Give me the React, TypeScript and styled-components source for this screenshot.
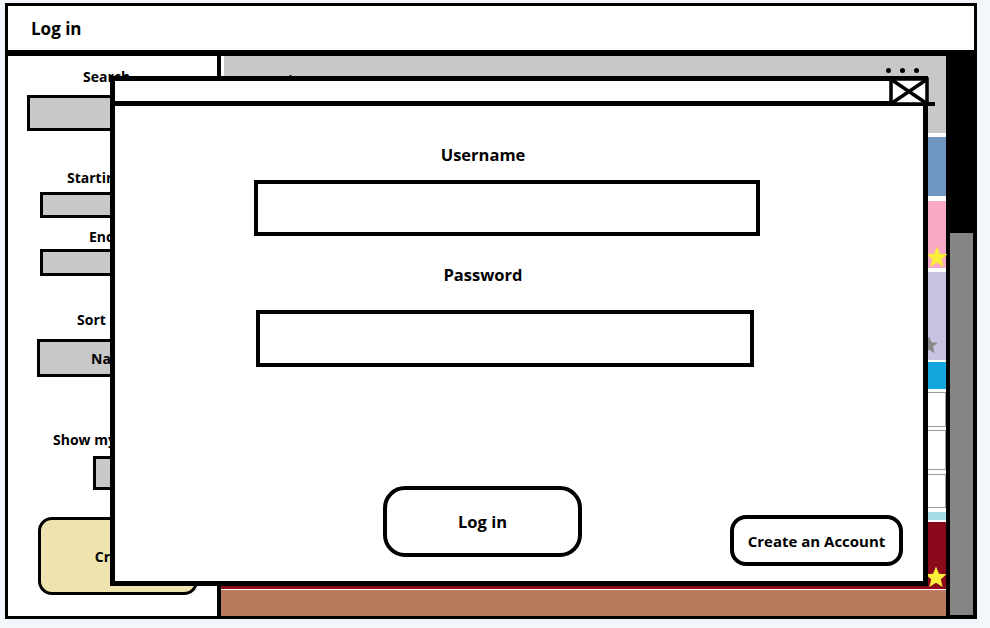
import styled, { createGlobalStyle } from "styled-components";

const GlobalStyle = createGlobalStyle`
  * { box-sizing: border-box; }
  html, body { margin: 0; padding: 0; }
  body {
    background: #f3f6fa;
    font-family: "Open Sans", "Liberation Sans", sans-serif;
    font-weight: 700;
    color: #000;
  }
`;

const Page = styled.div`
  padding: 3px 0 0 5px;
  height: 628px;
`;

const Frame = styled.div`
  position: relative;
  width: 972px;
  border: 3px solid #000;
  background: #fff;
`;

const TopBar = styled.div`
  height: 50px;
  display: flex;
  align-items: center;
  padding-left: 23px;
  border-bottom: 6px solid #000;
  font-size: 17px;
`;

const Body = styled.div`
  display: flex;
  height: 560px;
`;

/* ---------- sidebar ---------- */

const Sidebar = styled.div`
  width: 213px;
  border-right: 4px solid #000;
  display: flex;
  flex-direction: column;
  padding-top: 12px;
`;

const SideLabel = styled.div<{ $x: number; $mt: number }>`
  margin-top: ${(p) => p.$mt}px;
  padding-left: ${(p) => p.$x}px;
  font-size: 14px;
  line-height: 18px;
  white-space: nowrap;
`;

const GrayBox = styled.div<{ $x: number; $w: number; $h: number; $mt: number }>`
  margin-top: ${(p) => p.$mt}px;
  margin-left: ${(p) => p.$x}px;
  width: ${(p) => p.$w}px;
  height: ${(p) => p.$h}px;
  background: #c8c8c8;
  border: 3px solid #000;
  display: flex;
  align-items: center;
  justify-content: center;
  font-size: 14px;
`;

const CreateEventButton = styled.div`
  margin: 27px 0 0 30px;
  width: 160px;
  height: 78px;
  background: #efe4b0;
  border: 3px solid #000;
  border-radius: 14px;
  display: flex;
  align-items: center;
  justify-content: center;
  font-size: 14px;
`;

/* ---------- content ---------- */

const Content = styled.div`
  width: 725px;
  display: flex;
  flex-direction: column;
`;

const ListHeader = styled.div`
  height: 77px;
  margin-left: 3px;
  background: #c8c8c8;
  display: flex;
  justify-content: space-between;
  align-items: flex-start;
  padding: 12px 27px 0 26px;
  font-size: 14px;
  line-height: 18px;
`;

const HeaderTitle = styled.span`
  margin-top: 4px;
`;

const Dots = styled.div`
  display: flex;
  gap: 9px;
  span {
    width: 5px;
    height: 5px;
    border-radius: 50%;
    background: #000;
  }
`;

const Card = styled.div<{ $bg: string; $h: number; $mt: number; $line?: boolean }>`
  position: relative;
  margin-top: ${(p) => p.$mt}px;
  height: ${(p) => p.$h}px;
  background: ${(p) => p.$bg};
  border: ${(p) => (p.$line ? "1px solid #9a9a9a" : "none")};
`;

const StarBadge = styled.svg<{ $r: number; $b: number }>`
  position: absolute;
  right: ${(p) => p.$r}px;
  bottom: ${(p) => p.$b}px;
`;

const Footer = styled.div`
  margin-top: 1px;
  height: 26px;
  background: #b97b5b;
`;

const Rail = styled.div`
  width: 28px;
  background: #000;
  padding: 177px 1px 1px 4px;
  display: flex;
`;

const Scrollbar = styled.div`
  flex: 1;
  background: #858585;
`;

/* ---------- modal ---------- */

const Modal = styled.div`
  position: absolute;
  left: 102px;
  top: 70px;
  width: 818px;
  height: 510px;
  border: 5px solid #000;
  background: #fff;
  display: flex;
  flex-direction: column;
`;

const TitleBar = styled.div`
  position: relative;
  height: 25px;
  border-bottom: 5px solid #000;

  &::after {
    content: "";
    position: absolute;
    left: 100%;
    bottom: -5px;
    width: 12px;
    height: 4px;
    background: #000;
  }
`;

const CloseIcon = styled.svg`
  position: absolute;
  right: -6px;
  top: -4px;
`;

const ModalBody = styled.div`
  display: flex;
  flex-direction: column;
  padding-top: 39px;
`;

const Form = styled.div`
  margin-left: 139px;
  width: 506px;
  display: flex;
  flex-direction: column;
`;

const FieldLabel = styled.div<{ $mt: number }>`
  margin-top: ${(p) => p.$mt}px;
  padding-right: 48px;
  text-align: center;
  font-size: 16.5px;
  line-height: 20px;
`;

const TextBox = styled.div<{ $mt: number; $w: number; $h: number; $ml: number }>`
  margin-top: ${(p) => p.$mt}px;
  margin-left: ${(p) => p.$ml}px;
  width: ${(p) => p.$w}px;
  height: ${(p) => p.$h}px;
  border: 4.5px solid #000;
`;

const Actions = styled.div`
  margin-top: 119px;
  padding-left: 268px;
  display: flex;
  align-items: flex-start;
`;

const RoundButton = styled.div<{ $w: number; $h: number; $r: number; $fs: number; $mt: number; $ml: number }>`
  margin-top: ${(p) => p.$mt}px;
  margin-left: ${(p) => p.$ml}px;
  width: ${(p) => p.$w}px;
  height: ${(p) => p.$h}px;
  border: 4px solid #000;
  border-radius: ${(p) => p.$r}px;
  display: flex;
  align-items: center;
  justify-content: center;
  font-size: ${(p) => p.$fs}px;
  white-space: nowrap;
`;

function Star({ color, size, r, b }: { color: string; size: number; r: number; b: number }) {
  return (
    <StarBadge $r={r} $b={b} width={size} height={size} viewBox="0 0 24 24">
      <polygon
        points="12,1.5 15,8.8 22.5,9.3 16.8,14.2 18.6,22 12,17.8 5.4,22 7.2,14.2 1.5,9.3 9,8.8"
        fill={color}
      />
    </StarBadge>
  );
}

const cards = [
  { bg: "#6e96c0", h: 59, mt: 4 },
  { bg: "#f7a9c6", h: 67, mt: 5, star: { color: "#fbee3a", size: 24, r: -3, b: -1 } },
  { bg: "#c9c2e2", h: 88, mt: 4, star: { color: "#8a8a8a", size: 20, r: 7, b: 5 } },
  { bg: "#12a6de", h: 27, mt: 2 },
  { bg: "#ffffff", h: 35, mt: 3, line: true },
  { bg: "#ffffff", h: 40, mt: 3, line: true },
  { bg: "#ffffff", h: 34, mt: 4, line: true },
  { bg: "#a6dbe8", h: 8, mt: 4 },
  { bg: "#8a0a1c", h: 67, mt: 2, star: { color: "#fbee3a", size: 24, r: -2, b: 0 } },
];

export default function App() {
  return (
    <Page>
      <GlobalStyle />
      <Frame>
        <TopBar>Log in</TopBar>
        <Body>
          <Sidebar>
            <SideLabel $x={75} $mt={0}>Search</SideLabel>
            <GrayBox $x={19} $w={170} $h={36} $mt={9} />
            <SideLabel $x={59} $mt={38}>Starting Date</SideLabel>
            <GrayBox $x={32} $w={145} $h={26} $mt={5} />
            <SideLabel $x={81} $mt={10}>End Date</SideLabel>
            <GrayBox $x={32} $w={145} $h={27} $mt={3} />
            <SideLabel $x={69} $mt={35}>Sort By</SideLabel>
            <GrayBox $x={29} $w={150} $h={38} $mt={10}>Name</GrayBox>
            <SideLabel $x={45} $mt={54}>Show my events</SideLabel>
            <GrayBox $x={85} $w={38} $h={34} $mt={7} />
            <CreateEventButton>Create</CreateEventButton>
          </Sidebar>

          <Content>
            <ListHeader>
              <HeaderTitle>Location</HeaderTitle>
              <Dots>
                <span />
                <span />
                <span />
              </Dots>
            </ListHeader>
            {cards.map((c, i) => (
              <Card key={i} $bg={c.bg} $h={c.h} $mt={c.mt} $line={c.line}>
                {c.star && <Star color={c.star.color} size={c.star.size} r={c.star.r} b={c.star.b} />}
              </Card>
            ))}
            <Footer />
          </Content>

          <Rail>
            <Scrollbar />
          </Rail>
        </Body>

        <Modal>
          <TitleBar>
            <CloseIcon width="40" height="29" viewBox="0 0 40 29">
              <rect x="2" y="2" width="36" height="25" fill="#fff" stroke="#000" strokeWidth="3.5" />
              <path d="M3 3 L37 26 M37 3 L3 26" stroke="#000" strokeWidth="3.5" />
            </CloseIcon>
          </TitleBar>
          <ModalBody>
            <Form>
              <FieldLabel $mt={0}>Username</FieldLabel>
              <TextBox $mt={15} $ml={0} $w={506} $h={56} />
              <FieldLabel $mt={29}>Password</FieldLabel>
              <TextBox $mt={25} $ml={2} $w={498} $h={57} />
            </Form>
            <Actions>
              <RoundButton $w={199} $h={71} $r={22} $fs={16.5} $mt={0} $ml={0}>
                Log in
              </RoundButton>
              <RoundButton $w={173} $h={51} $r={16} $fs={15} $mt={29} $ml={148}>
                Create an Account
              </RoundButton>
            </Actions>
          </ModalBody>
        </Modal>
      </Frame>
    </Page>
  );
}
